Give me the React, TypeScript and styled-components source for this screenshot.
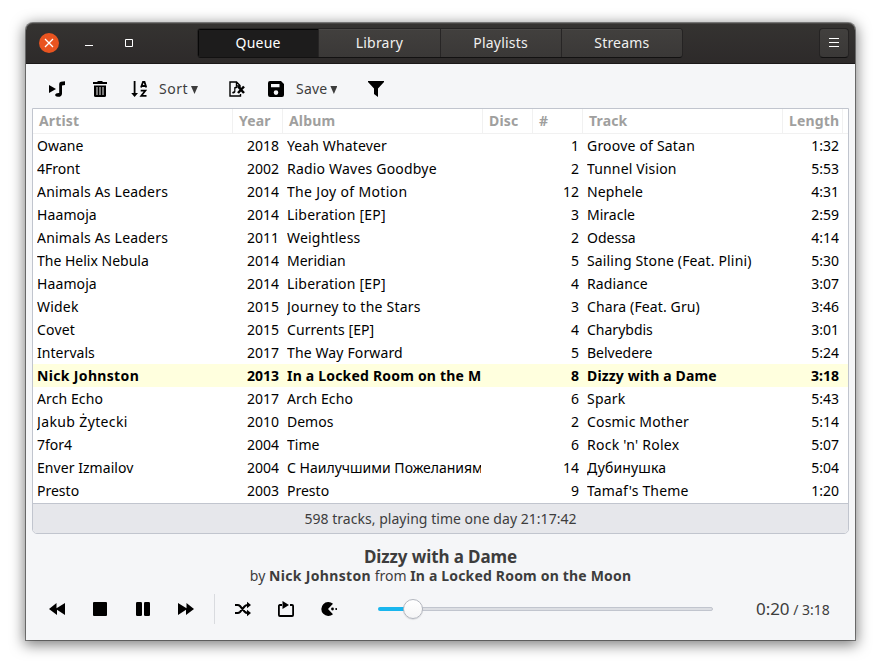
import React from "react";
import styled, { createGlobalStyle, css } from "styled-components";

const GlobalStyle = createGlobalStyle`
  * { box-sizing: border-box; }
  body {
    margin: 0;
    background: #fff;
    font-family: "Noto Sans", "Open Sans", sans-serif;
    font-size: 14px;
    overflow: hidden;
  }
`;

const Desktop = styled.div`
  width: 881px;
  height: 669px;
  padding: 23px 25px 28px 26px;
`;

const Window = styled.main`
  display: flex;
  flex-direction: column;
  width: 829px;
  height: 617px;
  background: #f5f6f8;
  border-radius: 7px 7px 0 0;
  box-shadow: 0 0 0 1px rgba(0, 0, 0, 0.42), 0 3px 14px 2px rgba(0, 0, 0, 0.5);
`;

const TitleBar = styled.header`
  display: flex;
  align-items: center;
  height: 41px;
  padding: 0 6px 0 13px;
  background: linear-gradient(#353331, #2d2a2a);
  border-bottom: 1px solid #1b1919;
  border-radius: 7px 7px 0 0;
  box-shadow: inset 0 1px #494745;
`;

const WindowButtons = styled.div`
  display: flex;
  align-items: center;
  gap: 20px;
  width: 159px;
`;

const CloseButton = styled.button`
  display: grid;
  place-items: center;
  width: 20px;
  height: 20px;
  padding: 0;
  border: 0;
  border-radius: 50%;
  background: #e95420;
`;

const PlainWindowButton = styled(CloseButton)`
  background: transparent;
`;

const Tabs = styled.nav`
  display: flex;
  width: 486px;
  height: 30px;
  margin-left: -1px;
  border-radius: 4px;
  overflow: hidden;
  border: 1px solid #252323;
  border-bottom-color: #121111;
`;

const Tab = styled.button<{ $active?: boolean }>`
  flex: 1;
  padding: 0 0 1px;
  border: 0;
  border-right: 1px solid #272525;
  font: inherit;
  letter-spacing: 0.2px;
  color: ${(p) => (p.$active ? "#fff" : "#f0f0ef")};
  background: ${(p) => (p.$active ? "#1d1c1c" : "linear-gradient(#42403e, #3a3837)")};
  box-shadow: ${(p) => (p.$active ? "inset 0 1px #050505, inset 1px 0 #080808" : "inset 0 1px #4a4846")};
  &:last-child { border-right: 0; }
`;

const MenuButton = styled.button`
  display: grid;
  place-items: center;
  width: 30px;
  height: 30px;
  margin-left: auto;
  padding: 0;
  border: 1px solid #252323;
  border-bottom-color: #121111;
  border-radius: 4px;
  background: linear-gradient(#42403e, #3a3837);
`;

const Toolbar = styled.div`
  display: flex;
  align-items: center;
  height: 44px;
  padding: 6px 0 0 23px;
  color: #3d3d3d;
`;

const Tool = styled.button<{ $width: number }>`
  display: flex;
  align-items: center;
  width: ${(p) => p.$width}px;
  height: 30px;
  padding: 0;
  border: 0;
  background: transparent;
  font: inherit;
  color: inherit;
  white-space: nowrap;
  svg { flex: none; color: #000; }
`;

const ToolLabel = styled.span<{ $spacing?: number }>`
  margin: -2px 0 0 12px;
  letter-spacing: ${(p) => p.$spacing ?? 0}px;
`;

const Caret = styled.i`
  width: 7px;
  height: 8px;
  margin: 2px 0 0 3px;
  background: #3d3d3d;
  clip-path: polygon(0 0, 100% 0, 50% 100%);
`;

const Panel = styled.section`
  display: flex;
  flex-direction: column;
  width: 817px;
  height: 426px;
  margin-left: 6px;
  border: 1px solid #c1c5ce;
  border-radius: 0 0 5px 5px;
  background: #fff;
  overflow: hidden;
`;

const columns = css`
  display: grid;
  grid-template-columns: 200px 50px 200px 50px 50px 200px 60px 5px;
`;

const HeaderRow = styled.div`
  ${columns}
  height: 25px;
  border-bottom: 1px solid #f1f1f1;
`;

const HeaderCell = styled.div`
  padding-left: 6px;
  border-right: 1px solid #f1f1f1;
  font-weight: 700;
  line-height: 24px;
  letter-spacing: 0.15px;
  color: #a09f9e;
  white-space: nowrap;
  &:last-child { border: 0; }
`;

const TrackRow = styled.div<{ $playing?: boolean }>`
  ${columns}
  height: 23px;
  line-height: 23px;
  color: #000;
  font-weight: ${(p) => (p.$playing ? 700 : 400)};
  background: ${(p) => (p.$playing ? "#ffffde" : "transparent")};
`;

const Cell = styled.div<{ $right?: boolean; $spacing?: number }>`
  margin: 0 ${(p) => (p.$right ? 4 : 2)}px 0 4px;
  overflow: hidden;
  text-align: ${(p) => (p.$right ? "right" : "left")};
  letter-spacing: ${(p) => p.$spacing ?? 0}px;
  white-space: nowrap;
`;

const Rows = styled.div`
  height: 369px;
`;

const Status = styled.footer`
  flex: 1;
  border-top: 1px solid #c1c5ce;
  background: #e6e7eb;
  color: #3d3d3d;
  line-height: 29px;
  text-align: center;
  letter-spacing: 0.03px;
`;

const NowPlaying = styled.div`
  height: 54px;
  padding-top: 12px;
  text-align: center;
  color: #3d3d3d;
`;

const SongTitle = styled.h1`
  margin: 0;
  font-size: 17px;
  line-height: 21px;
  letter-spacing: -0.1px;
`;

const SongInfo = styled.div`
  line-height: 18px;
  white-space: nowrap;
`;

const Emphasis = styled.b<{ $spacing: number }>`
  letter-spacing: ${(p) => p.$spacing}px;
`;

const Controls = styled.div`
  display: flex;
  align-items: center;
  height: 42px;
  padding-left: 23px;
  color: #3d3d3d;
`;

const Divider = styled.i`
  width: 1px;
  height: 30px;
  margin-left: -7px;
  margin-right: 20px;
  background: #d9dbdf;
`;

const Slider = styled.div`
  display: flex;
  align-items: center;
  width: 335px;
  height: 20px;
  margin-left: -2px;
`;

const Played = styled.i`
  width: 26px;
  height: 4px;
  border-radius: 2px 0 0 2px;
  background: #19b6ee;
`;

const Knob = styled.i`
  width: 20px;
  height: 20px;
  margin: 0 -1px;
  border: 1px solid #b3b6be;
  border-radius: 50%;
  background: linear-gradient(#fff, #f5f5f6);
  box-shadow: 0 1px 1px rgba(0, 0, 0, 0.1);
  z-index: 1;
`;

const Remaining = styled.i`
  flex: 1;
  height: 4px;
  border: 1px solid #c1c5ce;
  border-radius: 0 2px 2px 0;
  background: #dcdee3;
`;

const Time = styled.div`
  margin: -2px 0 0 43px;
  white-space: nowrap;
`;

const Elapsed = styled.span`
  font-size: 17px;
  letter-spacing: -0.05px;
`;

type IconProps = { children: React.ReactNode };
const Icon = ({ children }: IconProps) => (
  <svg width="16" height="16" viewBox="0 0 16 16" fill="currentColor">{children}</svg>
);

const PlayNoteIcon = () => (
  <Icon>
    <path d="M0 4 7 8 0 12Z" />
    <path d="M10.2 3Q10.2 .9 12 .7L16 .2V4L13 4.5V12.4Q12.9 15.8 9 15.8C6.5 15.8 6 14.5 6.2 13.5Q6.6 11.8 10.2 12Z" />
  </Icon>
);
const TrashIcon = () => (
  <Icon>
    <path d="M1 1H5.5V0H10.5V1H15V3H1Z" />
    <path d="M2 4.5H14V14.5Q14 16 12.5 16H3.5Q2 16 2 14.5Z" />
    <path d="M5 6V14M8 6V14M11 6V14" stroke="#858585" strokeWidth="1.8" />
  </Icon>
);
const SortIcon = () => (
  <Icon>
    <path d="M2.7 0H4.5V12H7L3.6 16 .2 12H2.7Z" />
    <path d="M10 6.5 12 1H13.5L15.3 6.5M10.5 5H14.5M9.7 9.7H14.3L10.3 14.8H15.5" fill="none" stroke="currentColor" strokeWidth="1.8" />
  </Icon>
);
const ClearIcon = () => (
  <Icon>
    <path d="M11.5 13V15H1V1H7.5L11 4.5V7M7.5 1V5H11" fill="none" stroke="currentColor" strokeWidth="1.4" />
    <path d="M5.2 6.3 8 5.3V7L6.4 7.5V11Q5.7 13 3.3 12.2 2.7 10.5 5.2 10.2Z" />
    <path d="m9 5.5 6 6.5m0-6.5-6 6.5" stroke="currentColor" strokeWidth="2.5" />
  </Icon>
);
const SaveIcon = () => (
  <Icon>
    <path fillRule="evenodd" d="M2 0H13L16 3V14Q16 16 14 16H2Q0 16 0 14V2Q0 0 2 0ZM3 3V6.3H11.5V3ZM8 9.3A2.3 2.3 0 1 0 8 13.9 2.3 2.3 0 1 0 8 9.3Z" />
  </Icon>
);
const FilterIcon = () => <Icon><path d="M0 0H16V1L10 7.5V16L6 13V7.5L0 1Z" /></Icon>;
const RewindIcon = () => <Icon><path d="M0 8 7.5 2V7.3L16 2V14L8 8.7V14Z" /></Icon>;
const ForwardIcon = () => <Icon><path d="M16 8 8.5 2V7.3L0 2V14L8 8.7V14Z" /></Icon>;
const StopIcon = () => <Icon><rect x="1" y="1" width="14" height="14" rx="1" /></Icon>;
const PauseIcon = () => (
  <Icon>
    <rect x="1" y="1" width="6" height="14" rx="1.3" />
    <rect x="9" y="1" width="6" height="14" rx="1.3" />
  </Icon>
);
const ShuffleIcon = () => (
  <Icon>
    <path d="M0 4H2.5Q4 4 5 5L9.5 10.5Q10.8 12 12.5 12H13M0 12H2.5Q4 12 5 11L9.5 5.5Q10.8 4 12.5 4H13" fill="none" stroke="currentColor" strokeWidth="2" />
    <path d="M12 .8 16 4 12 7.2ZM12 8.8 16 12 12 15.2Z" />
  </Icon>
);
const RepeatIcon = () => (
  <Icon>
    <path d="M4 4H1.8Q.9 4 .9 5V14Q.9 15 1.9 15H14.1Q15.1 15 15.1 14V5Q15.1 4 14 4H12" fill="none" stroke="currentColor" strokeWidth="1.8" />
    <path d="M4.5 0 11 4 4.5 8Z" />
  </Icon>
);
const ConsumeIcon = () => (
  <Icon>
    <path d="M12 2.8A7 7 0 1 0 12 13.2L7 8Z" />
    <circle cx="11.5" cy="8" r="1.4" />
    <circle cx="15.2" cy="8" r="1" />
  </Icon>
);

type Track = {
  artist: [string, number?];
  year: string;
  album: [string, number?];
  number: string;
  title: [string, number?];
  length: string;
  playing?: boolean;
};

const tracks: Track[] = [
  { artist: ["Owane"], year: "2018", album: ["Yeah Whatever", 0.12], number: "1", title: ["Groove of Satan", 0.2], length: "1:32" },
  { artist: ["4Front"], year: "2002", album: ["Radio Waves Goodbye", 0.2], number: "2", title: ["Tunnel Vision", 0.15], length: "5:53" },
  { artist: ["Animals As Leaders", 0.2], year: "2014", album: ["The Joy of Motion", 0.34], number: "12", title: ["Nephele", 0.1], length: "4:31" },
  { artist: ["Haamoja", 0.1], year: "2014", album: ["Liberation [EP]", 0.2], number: "3", title: ["Miracle"], length: "2:59" },
  { artist: ["Animals As Leaders", 0.2], year: "2011", album: ["Weightless", 0.2], number: "2", title: ["Odessa"], length: "4:14" },
  { artist: ["The Helix Nebula"], year: "2014", album: ["Meridian"], number: "5", title: ["Sailing Stone (Feat. Plini)", 0.15], length: "5:30" },
  { artist: ["Haamoja", 0.1], year: "2014", album: ["Liberation [EP]", 0.2], number: "4", title: ["Radiance", 0.1], length: "3:07" },
  { artist: ["Widek", 0.2], year: "2015", album: ["Journey to the Stars", 0.22], number: "3", title: ["Chara (Feat. Gru)", 0.12], length: "3:46" },
  { artist: ["Covet", 0.2], year: "2015", album: ["Currents [EP]", 0.08], number: "4", title: ["Charybdis"], length: "3:01" },
  { artist: ["Intervals", 0.05], year: "2017", album: ["The Way Forward", 0.13], number: "5", title: ["Belvedere"], length: "5:24" },
  { artist: ["Nick Johnston", 0.34], year: "2013", album: ["In a Locked Room on the Moon", 0.2], number: "8", title: ["Dizzy with a Dame", 0.13], length: "3:18", playing: true },
  { artist: ["Arch Echo", 0.1], year: "2017", album: ["Arch Echo", 0.1], number: "6", title: ["Spark", 0.2], length: "5:43" },
  { artist: ["Jakub Żytecki", 0.37], year: "2010", album: ["Demos"], number: "2", title: ["Cosmic Mother", 0.18], length: "5:14" },
  { artist: ["7for4"], year: "2004", album: ["Time"], number: "6", title: ["Rock 'n' Rolex", 0.25], length: "5:07" },
  { artist: ["Enver Izmailov", 0.05], year: "2004", album: ["С Наилучшими Пожеланиями"], number: "14", title: ["Дубинушка", 0.12], length: "5:04" },
  { artist: ["Presto"], year: "2003", album: ["Presto"], number: "9", title: ["Tamaf's Theme", 0.15], length: "1:20" },
];

export default function App() {
  return (
    <>
      <GlobalStyle />
      <Desktop>
        <Window>
          <TitleBar>
            <WindowButtons>
              <CloseButton aria-label="Close">
                <svg width="20" height="20" fill="none" stroke="#fff" strokeWidth="1.3"><path d="m6 6 8 8m0-8-8 8" /></svg>
              </CloseButton>
              <PlainWindowButton aria-label="Minimize">
                <svg width="20" height="20" fill="#fff"><path d="M6 12h8v1H6z" /></svg>
              </PlainWindowButton>
              <PlainWindowButton aria-label="Maximize">
                <svg width="20" height="20" fill="none" stroke="#fff"><path d="M6.5 6.5h7v7h-7z" /></svg>
              </PlainWindowButton>
            </WindowButtons>
            <Tabs>
              <Tab $active>Queue</Tab>
              <Tab>Library</Tab>
              <Tab>Playlists</Tab>
              <Tab>Streams</Tab>
            </Tabs>
            <MenuButton aria-label="Menu">
              <svg width="10" height="10" fill="#fff"><path d="M0 0h10v1H0zM0 4h10v1H0zM0 8h10v1H0z" /></svg>
            </MenuButton>
          </TitleBar>
          <Toolbar>
            <Tool $width={43}><PlayNoteIcon /></Tool>
            <Tool $width={39}><TrashIcon /></Tool>
            <Tool $width={98}><SortIcon /><ToolLabel $spacing={0.5}>Sort</ToolLabel><Caret /></Tool>
            <Tool $width={39}><ClearIcon /></Tool>
            <Tool $width={100}><SaveIcon /><ToolLabel $spacing={0.2}>Save</ToolLabel><Caret /></Tool>
            <Tool $width={16}><FilterIcon /></Tool>
          </Toolbar>
          <Panel>
            <HeaderRow>
              <HeaderCell>Artist</HeaderCell>
              <HeaderCell>Year</HeaderCell>
              <HeaderCell>Album</HeaderCell>
              <HeaderCell>Disc</HeaderCell>
              <HeaderCell>#</HeaderCell>
              <HeaderCell>Track</HeaderCell>
              <HeaderCell>Length</HeaderCell>
              <HeaderCell />
            </HeaderRow>
            <Rows>
              {tracks.map((t, i) => (
                <TrackRow key={i} $playing={t.playing}>
                  <Cell $spacing={t.artist[1]}>{t.artist[0]}</Cell>
                  <Cell $right>{t.year}</Cell>
                  <Cell $spacing={t.album[1]}>{t.album[0]}</Cell>
                  <Cell />
                  <Cell $right>{t.number}</Cell>
                  <Cell $spacing={t.title[1]}>{t.title[0]}</Cell>
                  <Cell $right>{t.length}</Cell>
                </TrackRow>
              ))}
            </Rows>
            <Status>598 tracks, playing time one day 21:17:42</Status>
          </Panel>
          <NowPlaying>
            <SongTitle>Dizzy with a Dame</SongTitle>
            <SongInfo>
              by <Emphasis $spacing={0.34}>Nick Johnston</Emphasis> from <Emphasis $spacing={0.18}>In a Locked Room on the Moon</Emphasis>
            </SongInfo>
          </NowPlaying>
          <Controls>
            <Tool $width={43}><RewindIcon /></Tool>
            <Tool $width={43}><StopIcon /></Tool>
            <Tool $width={43}><PauseIcon /></Tool>
            <Tool $width={43}><ForwardIcon /></Tool>
            <Divider />
            <Tool $width={43}><ShuffleIcon /></Tool>
            <Tool $width={43}><RepeatIcon /></Tool>
            <Tool $width={59}><ConsumeIcon /></Tool>
            <Slider><Played /><Knob /><Remaining /></Slider>
            <Time><Elapsed>0:20</Elapsed> / 3:18</Time>
          </Controls>
        </Window>
      </Desktop>
    </>
  );
}
